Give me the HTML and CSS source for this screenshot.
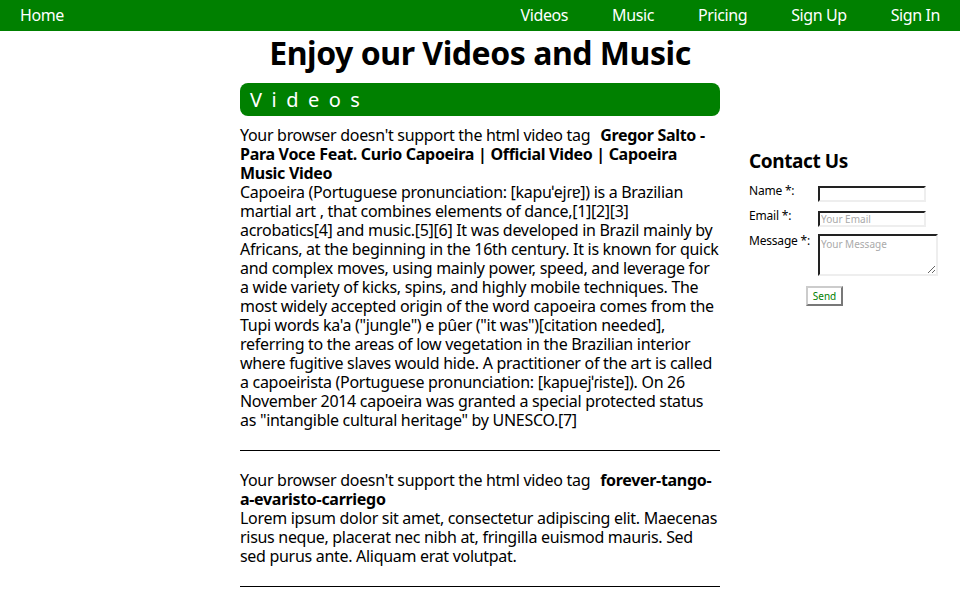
FILE: index.html
```html
<!DOCTYPE html>
<html>
<head>
<meta charset="utf-8">
<link rel="stylesheet" href="styles.css">
</head>
<body>
<nav class="nav">
  <a class="nav-link home" href="#">Home</a>
  <div class="nav-right">
    <a class="nav-link" href="#">Videos</a>
    <a class="nav-link" href="#">Music</a>
    <a class="nav-link" href="#">Pricing</a>
    <a class="nav-link" href="#">Sign Up</a>
    <a class="nav-link" href="#">Sign In</a>
  </div>
</nav>
<h1 class="title">Enjoy our Videos and Music</h1>
<div class="layout">
  <div class="spacer"></div>
  <main class="main">
    <h2 class="section-head">Videos</h2>
    <div class="item">
      <p class="item-text">Your browser doesn't support the html video tag <b class="item-title">Gregor Salto - Para Voce Feat. Curio Capoeira | Official Video | Capoeira Music Video</b></p>
      <p class="item-text">Capoeira (Portuguese pronunciation: [kapuˈejɾɐ]) is a Brazilian martial art , that combines elements of dance,[1][2][3] acrobatics[4] and music.[5][6] It was developed in Brazil mainly by Africans, at the beginning in the 16th century. It is known for quick and complex moves, using mainly power, speed, and leverage for a wide variety of kicks, spins, and highly mobile techniques. The most widely accepted origin of the word capoeira comes from the Tupi words ka'a ("jungle") e pûer ("it was")[citation needed], referring to the areas of low vegetation in the Brazilian interior where fugitive slaves would hide. A practitioner of the art is called a capoeirista (Portuguese pronunciation: [kapuejˈɾiste]). On 26 November 2014 capoeira was granted a special protected status as "intangible cultural heritage" by UNESCO.[7]</p>
    </div>
    <hr class="rule">
    <div class="item">
      <p class="item-text">Your browser doesn't support the html video tag <b class="item-title">forever-tango-a-evaristo-carriego</b></p>
      <p class="item-text">Lorem ipsum dolor sit amet, consectetur adipiscing elit. Maecenas risus neque, placerat nec nibh at, fringilla euismod mauris. Sed sed purus ante. Aliquam erat volutpat.</p>
    </div>
    <hr class="rule">
  </main>
  <aside class="aside">
    <h3 class="contact-title">Contact Us</h3>
    <form class="form">
      <label class="lbl">Name *:</label>
      <input class="field" type="text">
      <label class="lbl">Email *:</label>
      <input class="field" type="text" placeholder="Your Email">
      <label class="lbl">Message *:</label>
      <textarea class="area" placeholder="Your Message"></textarea>
      <span></span>
      <button class="send" type="button">Send</button>
    </form>
  </aside>
</div>
</body>
</html>
```
FILE: styles.css
```css
* { box-sizing: border-box; }
body {
  margin: 0;
  font-family: "Noto Sans", "Open Sans", sans-serif;
  color: #000;
  background: #fff;
}
.nav {
  display: flex;
  justify-content: space-between;
  align-items: center;
  height: 31px;
  background: #008000;
  padding: 0 20px;
}
.nav-right { display: flex; gap: 44px; }
.nav-link {
  color: #fff;
  text-decoration: none;
  font-size: 16px;
  line-height: 31px;
  letter-spacing: -0.4px;
}
.title {
  margin: 0;
  text-align: center;
  font-size: 32px;
  line-height: 44px;
  font-weight: bold;
  letter-spacing: -0.46px;
}
.layout { display: flex; margin-top: 8px; }
.spacer { width: 240px; flex: none; }
.main { width: 480px; flex: none; }
.section-head {
  margin: 0 0 10px;
  height: 33px;
  background: #008000;
  color: #fff;
  border-radius: 8px;
  font-weight: normal;
  font-size: 20px;
  line-height: 33px;
  padding-left: 10px;
  letter-spacing: 9.5px;
}
.item-text {
  margin: 0;
  font-size: 16px;
  line-height: 19px;
  letter-spacing: -0.3px;
}
.item-title { margin-left: 6px; letter-spacing: -0.3px; }
.rule {
  margin: 20px 0;
  border: 0;
  border-top: 1px solid #000;
  height: 0;
}
.aside { margin-left: 29px; padding-top: 66px; }
.contact-title {
  margin: 0 0 11px;
  font-size: 19px;
  line-height: 24px;
  font-weight: bold;
  letter-spacing: -0.4px;
}
.form {
  display: grid;
  grid-template-columns: 69px auto;
  row-gap: 7px;
  align-items: start;
  font-size: 12px;
  letter-spacing: -0.2px;
}
.lbl { line-height: 14px; }
.field {
  margin-top: 2px;
  width: 108px;
  height: 16px;
  padding: 0 1px;
  border: 2px inset #eee;
  border-top-color: #777; border-left-color: #777;
  font-family: inherit;
  font-size: 10px;
}
.area {
  width: 120px;
  height: 42px;
  padding: 1px;
  border: 2px inset #eee;
  border-top-color: #777; border-left-color: #777;
  font-family: inherit;
  font-size: 10px;
}
.field::placeholder, .area::placeholder { color: #aaa; }
.send {
  margin-left: -12px;
  margin-top: 3px;
  width: 37px;
  height: 20px;
  padding: 0;
  background: #fff;
  color: #008000;
  border: 2px outset #ccc;
  font-family: inherit;
  font-size: 10px;
}
```
